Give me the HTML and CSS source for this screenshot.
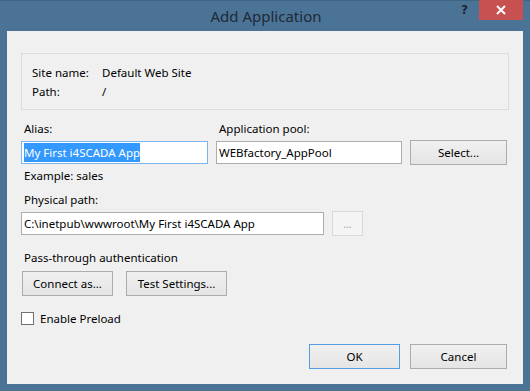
FILE: index.html
```html
<!DOCTYPE html>
<html lang="en">
<head>
  <meta charset="UTF-8">
  <title>Add Application</title>
  <link rel="stylesheet" href="styles.css">
</head>
<body>
  <div class="window">
    <div class="titlebar">
      <span class="title">Add Application</span>
      <span class="help">?</span>
      <span class="close">
        <svg width="10" height="10" viewBox="0 0 10 10"><path d="M1 1 L9 9 M9 1 L1 9" stroke="#fff" stroke-width="2"/></svg>
      </span>
    </div>
    <div class="client">
      <div class="site-box">
        <div class="site-row"><span class="site-key">Site name:</span><span>Default Web Site</span></div>
        <div class="site-row"><span class="site-key">Path:</span><span>/</span></div>
      </div>

      <div class="row labels">
        <span class="label col-a">Alias:</span>
        <span class="label col-b">Application pool:</span>
      </div>
      <div class="row fields">
        <div class="input col-a focused"><span class="selected">My First i4SCADA App</span></div>
        <div class="input col-b">WEBfactory_AppPool</div>
        <button class="btn select-btn">Select...</button>
      </div>
      <div class="label hint">Example: sales</div>

      <div class="label path-label">Physical path:</div>
      <div class="row fields">
        <div class="input path-input">C:\inetpub\wwwroot\My First i4SCADA App</div>
        <button class="btn browse-btn" disabled>...</button>
      </div>

      <div class="label auth-label">Pass-through authentication</div>
      <div class="row auth-row">
        <button class="btn connect-btn">Connect as...</button>
        <button class="btn test-btn">Test Settings...</button>
      </div>

      <label class="check-row">
        <span class="checkbox"></span>
        <span>Enable Preload</span>
      </label>

      <div class="row footer">
        <button class="btn ok-btn">OK</button>
        <button class="btn cancel-btn">Cancel</button>
      </div>
    </div>
  </div>
</body>
</html>
```

FILE: styles.css
```css
* {
  margin: 0;
  padding: 0;
  box-sizing: border-box;
}

body {
  font-family: "Noto Sans", "Open Sans", sans-serif;
  font-size: 11.5px;
  color: #000;
  background-color: #4b7396;
}

.window {
  width: 530px;
  height: 391px;
  background-color: #4b7396;
  border-top: 1px solid #3f6584;
  padding: 0 7px 7px 7px;
  display: flex;
  flex-direction: column;
}

.titlebar {
  position: relative;
  height: 30px;
  display: flex;
  justify-content: center;
  align-items: center;
}

.title {
  font-size: 15px;
  color: #1f2a36;
  padding-left: 2px;
  padding-bottom: 1px;
}

.help {
  position: absolute;
  top: 2px;
  right: 55px;
  font-family: "DejaVu Sans", sans-serif;
  font-weight: bold;
  font-size: 12px;
  color: #1c2733;
}

.close {
  position: absolute;
  top: -1px;
  right: 0;
  width: 44px;
  height: 20px;
  background-color: #c75050;
  display: flex;
  justify-content: center;
  align-items: center;
}

.client {
  flex: 1;
  background-color: #f0f0f0;
  padding: 22px 16px 15px 14px;
  display: flex;
  flex-direction: column;
}

.site-box {
  width: 488px;
  height: 57px;
  border: 1px solid #dcdcdc;
  padding: 9px 0 0 10px;
}

.site-row {
  display: flex;
  height: 19px;
  line-height: 19px;
}

.site-key {
  width: 70px;
}

.row {
  display: flex;
  align-items: center;
}

.label {
  line-height: 16px;
  padding-left: 3px;
}

.labels {
  margin-top: 11px;
  height: 16px;
}

.col-a {
  width: 187px;
}

.col-b {
  width: 186px;
  margin-left: 8px;
}

.fields {
  margin-top: 3px;
  height: 25px;
}

.input {
  height: 23px;
  line-height: 21px;
  border: 1px solid #abadb3;
  background-color: #fff;
  padding-left: 2px;
  white-space: nowrap;
  overflow: hidden;
}

.input.focused {
  border-color: #7eb4ea;
}

.selected {
  background-color: #3399ff;
  color: #fff;
  padding: 2px 0;
}

.btn {
  font-family: inherit;
  font-size: 11.5px;
  color: #000;
  height: 25px;
  border: 1px solid #acacac;
  background: linear-gradient(#f0f0f0, #e5e5e5);
}

.select-btn {
  width: 97px;
  margin-left: 8px;
}

.hint {
  margin-top: 3px;
}

.path-label {
  margin-top: 8px;
}

.path-input {
  width: 303px;
}

.browse-btn {
  width: 31px;
  margin-left: 8px;
  border-color: #d9d9d9;
  background: #f4f4f4;
  color: #a0a0a0;
  font-size: 10px;
}

.auth-label {
  margin-top: 14px;
}

.auth-row {
  margin-top: 5px;
  padding-left: 1px;
  gap: 13px;
}

.connect-btn {
  width: 91px;
}

.test-btn {
  width: 101px;
}

.check-row {
  display: flex;
  align-items: center;
  margin-top: 15px;
  height: 14px;
  gap: 6px;
}

.checkbox {
  width: 13px;
  height: 13px;
  border: 1px solid #707070;
  background-color: #fff;
}

.footer {
  margin-top: auto;
  justify-content: flex-end;
  gap: 10px;
}

.ok-btn {
  width: 91px;
  border-color: #569de5;
}

.cancel-btn {
  width: 97px;
}
```
